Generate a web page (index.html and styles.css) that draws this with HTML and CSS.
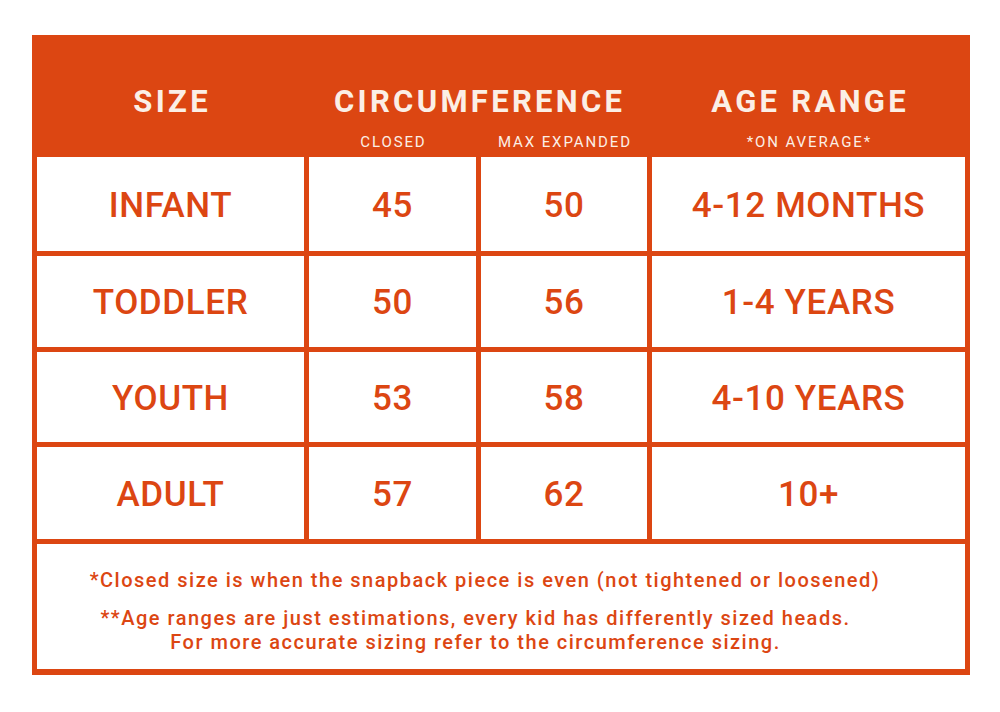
FILE: index.html
```html
<!DOCTYPE html>
<html lang="en">
<head>
<meta charset="utf-8">
<title>Size Chart</title>
<link rel="stylesheet" href="styles.css">
</head>
<body>
<div class="chart">
  <div class="head">
    <div class="h-title c1">SIZE</div>
    <div class="h-title c23">CIRCUMFERENCE</div>
    <div class="h-title c4">AGE RANGE</div>
    <div class="h-sub c1"></div>
    <div class="h-sub c2">CLOSED</div>
    <div class="h-sub c3">MAX EXPANDED</div>
    <div class="h-sub c4">*ON AVERAGE*</div>
  </div>
  <div class="body">
    <div class="cell r1">INFANT</div><div class="cell r1">45</div><div class="cell r1">50</div><div class="cell r1">4-12 MONTHS</div>
    <div class="cell r2">TODDLER</div><div class="cell r2">50</div><div class="cell r2">56</div><div class="cell r2">1-4 YEARS</div>
    <div class="cell r3">YOUTH</div><div class="cell r3">53</div><div class="cell r3">58</div><div class="cell r3">4-10 YEARS</div>
    <div class="cell r4">ADULT</div><div class="cell r4">57</div><div class="cell r4">62</div><div class="cell r4">10+</div>
  </div>
  <div class="foot">
    <p class="note1">*Closed size is when the snapback piece is even (not tightened or loosened)</p>
    <p class="note2">**Age ranges are just estimations, every kid has differently sized heads.<br>For more accurate sizing refer to the circumference sizing.</p>
  </div>
</div>
</body>
</html>
```
FILE: styles.css
```css
html, body {
  margin: 0;
  padding: 0;
  background: #ffffff;
}
body {
  width: 1000px;
  height: 712px;
  overflow: hidden;
  font-family: Roboto, "Liberation Sans", sans-serif;
}
.chart {
  margin: 35px 0 0 32px;
  width: 938px;
  box-sizing: border-box;
  background: #dc4612;
  padding: 0 5px 6px 5px;
}
.head {
  display: grid;
  grid-template-columns: 267px 167px 166px 313px;
  column-gap: 5px;
  padding: 49px 0 6px 0;
  color: #fbefe6;
  text-align: center;
}
.h-title {
  font-size: 31px;
  font-weight: 700;
  line-height: 36px;
  letter-spacing: 3.3px;
  text-indent: 3.3px;
}
.c1 { grid-column: 1; }
.c23 { grid-column: 2 / span 2; }
.c2 { grid-column: 2; }
.c3 { grid-column: 3; }
.c4 { grid-column: 4; }
.h-sub {
  grid-row: 2;
  margin-top: 13px;
  font-size: 15px;
  font-weight: 400;
  line-height: 18px;
  letter-spacing: 1.9px;
  text-indent: 1.9px;
}
.body {
  display: grid;
  grid-template-columns: 267px 167px 166px 313px;
  grid-template-rows: 94px 91px 90px 92px;
  gap: 5px;
}
.cell {
  background: #ffffff;
  color: #dc4612;
  display: flex;
  align-items: center;
  justify-content: center;
  padding-top: 2px;
  box-sizing: border-box;
  font-size: 35px;
  font-weight: 500;
  letter-spacing: 0.6px;
}
.foot {
  margin-top: 5px;
  height: 125px;
  box-sizing: border-box;
  background: #ffffff;
  color: #dc4612;
  text-align: center;
  padding-top: 24px;
  font-size: 20px;
  font-weight: 500;
  line-height: 24px;
  letter-spacing: 1.5px;
}
.foot p {
  margin: 0;
}
.note1 {
  padding-right: 32px;
}
.note2 {
  margin-top: 14px !important;
  padding-right: 51px;
}
```
